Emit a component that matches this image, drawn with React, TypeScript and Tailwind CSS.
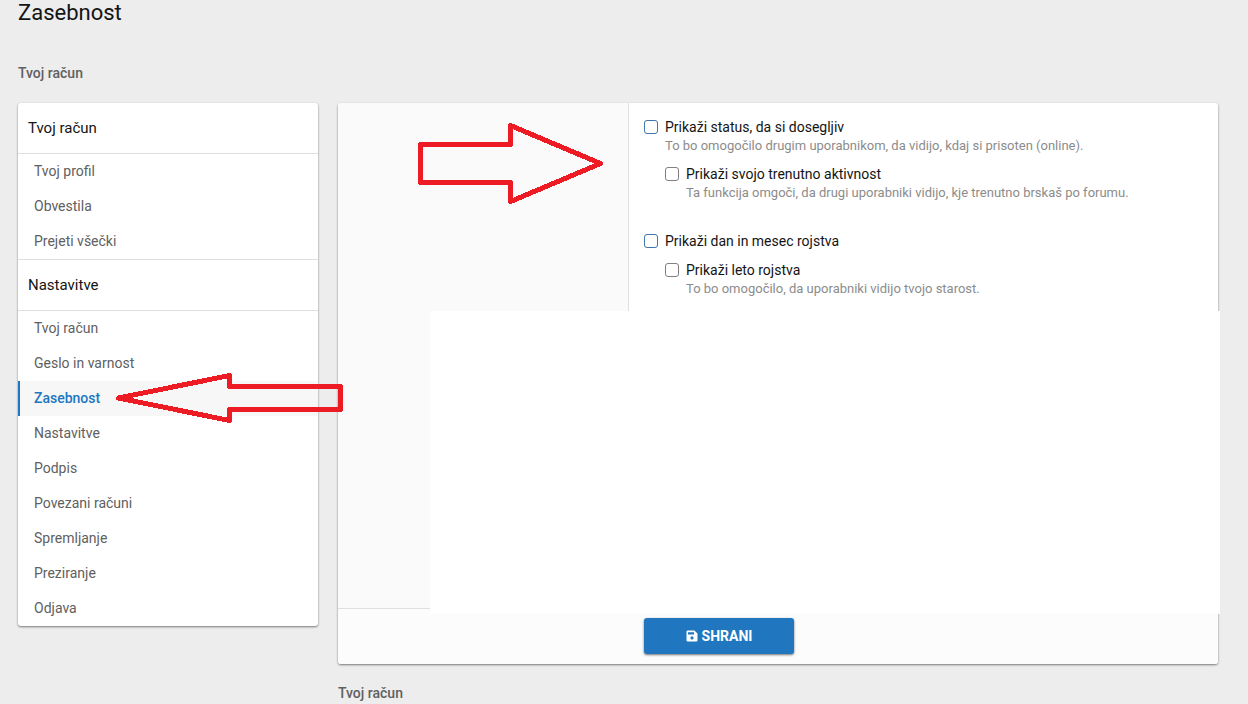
import React from "react";

type NavItem = { label: string; active?: boolean };

const accountItems: NavItem[] = [
  { label: "Tvoj profil" },
  { label: "Obvestila" },
  { label: "Prejeti všečki" },
];

const settingsItems: NavItem[] = [
  { label: "Tvoj račun" },
  { label: "Geslo in varnost" },
  { label: "Zasebnost", active: true },
  { label: "Nastavitve" },
  { label: "Podpis" },
  { label: "Povezani računi" },
  { label: "Spremljanje" },
  { label: "Preziranje" },
  { label: "Odjava" },
];

const cardShadow =
  "shadow-[0_1px_3px_rgba(0,0,0,0.12),0_1px_2px_rgba(0,0,0,0.40)]";

function NavGroup({ title, items }: { title: string; items: NavItem[] }) {
  return (
    <section className="border-[#dfdfdf] not-first:border-t">
      <h2 className="border-b border-[#dfdfdf] px-2.5 py-[15px] text-[15px] leading-5 text-[#141414]">
        {title}
      </h2>
      <ul>
        {items.map((item) => (
          <li key={item.label}>
            <a
              href="#"
              aria-current={item.active ? "page" : undefined}
              className={
                item.active
                  ? "block border-l-2 border-[#2077c0] bg-[#f7f7f7] py-[7px] pl-3.5 text-sm leading-[21px] font-medium text-[#2077c0]"
                  : "block py-[7px] pl-4 text-sm leading-[21px] text-[#606060]"
              }
            >
              {item.label}
            </a>
          </li>
        ))}
      </ul>
    </section>
  );
}

type OptionProps = {
  id: string;
  label: string;
  hint?: string;
  children?: React.ReactNode;
};

function Option({ id, label, hint, children }: OptionProps) {
  return (
    <div className="flex gap-[7px]">
      <input
        id={id}
        type="checkbox"
        aria-describedby={hint ? id + "-hint" : undefined}
        className={
          children
            ? "mt-[3px] size-3.5 shrink-0 appearance-none rounded-[3px] border border-[#3f76ad] bg-white checked:bg-[#2077c0]"
            : "mt-[3px] size-3.5 shrink-0 appearance-none rounded-[3px] border border-[#808080] bg-white checked:bg-[#2077c0]"
        }
      />
      <div>
        <label htmlFor={id} className="block text-sm leading-5 text-[#141414]">
          {label}
        </label>
        {hint && (
          <p id={id + "-hint"} className="text-[13px] leading-[18px] text-[#8c8c8c]">
            {hint}
          </p>
        )}
        {children && <div className="mt-[9px]">{children}</div>}
      </div>
    </div>
  );
}

function SaveIcon() {
  return (
    <svg viewBox="0 0 12 12" className="size-3" fill="currentColor" fillRule="evenodd" aria-hidden="true">
      <path d="M1.7 .5h6.7l3.1 3v6.8q0 1.2-1.2 1.2H1.7Q.5 11.500 .5 10.300V1.700Q.5 .5 1.700 .5ZM2 2.200v2.300h6V2.200ZM6 6.300a1.600 1.600 0 1 0 0 3.200a1.600 1.600 0 0 0 0-3.200Z" />
    </svg>
  );
}

export default function App() {
  return (
    <div className="relative min-h-screen bg-[#ededed] pr-[30px] pl-[18px] font-[Roboto,'Open_Sans',sans-serif]">
      <h1 className="text-[22px] leading-[25px] text-[#141414]">Zasebnost</h1>
      <nav aria-label="Pot" className="mt-[38px] text-sm leading-5 font-medium text-[#606060]">
        <a href="#">Tvoj račun</a>
      </nav>

      <div className="mt-5 flex items-start gap-5">
        <nav aria-label="Račun" className={"w-[300px] shrink-0 overflow-hidden rounded-[3px] bg-white " + cardShadow}>
          <NavGroup title="Tvoj račun" items={accountItems} />
          <NavGroup title="Nastavitve" items={settingsItems} />
        </nav>

        <main className="min-w-0 flex-1">
          <form className={"relative rounded-[3px] bg-white " + cardShadow}>
            <div className="flex min-h-[505px]">
              <div className="w-[291px] shrink-0 rounded-tl-[3px] border-r border-[#dfdfdf] bg-[#fafafa]" />
              <div className="flex flex-1 flex-col gap-[29px] px-[15px] pt-3.5">
                <Option
                  id="show-online"
                  label="Prikaži status, da si dosegljiv"
                  hint="To bo omogočilo drugim uporabnikom, da vidijo, kdaj si prisoten (online)."
                >
                  <Option
                    id="show-activity"
                    label="Prikaži svojo trenutno aktivnost"
                    hint="Ta funkcija omgoči, da drugi uporabniki vidijo, kje trenutno brskaš po forumu."
                  />
                </Option>
                <Option id="show-birthday" label="Prikaži dan in mesec rojstva">
                  <Option
                    id="show-year"
                    label="Prikaži leto rojstva"
                    hint="To bo omogočilo, da uporabniki vidijo tvojo starost."
                  />
                </Option>
              </div>
            </div>
            <div className="rounded-b-[3px] border-t border-[#dfdfdf] bg-[#fcfcfc] pt-[9px] pb-2.5 pl-[306px]">
              <button
                type="button"
                className="relative z-20 flex h-9 w-[150px] items-center justify-center gap-1 rounded-[3px] bg-[#2077c0] pb-px text-sm font-bold text-white shadow-[0_1px_3px_rgba(0,0,0,0.24),0_1px_2px_rgba(0,0,0,0.36)]"
              >
                <SaveIcon />
                SHRANI
              </button>
            </div>
            <div className="absolute top-[208px] -right-0.5 bottom-[50px] left-[92px] z-10 bg-white" />
          </form>
          <nav aria-label="Pot na dnu" className="mt-[19px] text-sm leading-5 font-medium text-[#606060]">
            <a href="#">Tvoj račun</a>
          </nav>
        </main>
      </div>

      <svg
        className="pointer-events-none absolute top-[120px] left-[414px] z-30 h-[88px] w-[194px]"
        viewBox="414 120 194 88"
        fill="none"
        stroke="#ed1c24"
        strokeWidth="5"
        strokeLinejoin="round"
        shapeRendering="crispEdges"
        aria-hidden="true"
      >
        <path d="M420.500 144.500H510.500V125.500L600.500 163.500L510.500 201.500V182.500H420.500Z" />
      </svg>
      <svg
        className="pointer-events-none absolute top-[368px] left-[112px] z-30 h-[60px] w-[236px]"
        viewBox="112 368 236 60"
        fill="none"
        stroke="#ed1c24"
        strokeWidth="5"
        strokeLinejoin="round"
        shapeRendering="crispEdges"
        aria-hidden="true"
      >
        <path d="M118.500 398L229.500 375.500V386.500H340.500V409.500H229.500V420.500Z" />
      </svg>
    </div>
  );
}
